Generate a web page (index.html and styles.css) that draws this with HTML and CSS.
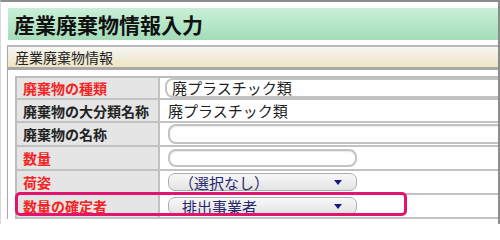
FILE: index.html
```html
<!DOCTYPE html>
<html lang="ja">
<head>
<meta charset="utf-8">
<title>産業廃棄物情報入力</title>
<link rel="stylesheet" href="styles.css">
</head>
<body>
<div class="screen">
  <h1 class="title">産業廃棄物情報入力</h1>
  <section class="panel">
    <div class="panel-head">産業廃棄物情報</div>
    <div class="panel-body">
      <div class="form-wrap">
        <table class="form">
          <tr class="row-short">
            <th class="req">廃棄物の種類</th>
            <td><div class="ro">廃プラスチック類</div></td>
          </tr>
          <tr class="row-short">
            <th>廃棄物の大分類名称</th>
            <td><span class="plain">廃プラスチック類</span></td>
          </tr>
          <tr>
            <th>廃棄物の名称</th>
            <td><div class="field field-wide"></div></td>
          </tr>
          <tr>
            <th class="req">数量</th>
            <td><div class="field field-short"></div></td>
          </tr>
          <tr>
            <th class="req">荷姿</th>
            <td><div class="select"><span>（選択なし）</span><i class="caret"></i></div></td>
          </tr>
          <tr>
            <th class="req">数量の確定者</th>
            <td><div class="select"><span class="sel-text">排出事業者</span><i class="caret"></i></div></td>
          </tr>
        </table>
        <div class="highlight"></div>
      </div>
    </div>
  </section>
</div>
</body>
</html>
```

FILE: styles.css
```css
html, body {
  margin: 0;
  padding: 0;
  background: #ffffff;
}

.screen {
  width: 500px;
  height: 224px;
  box-sizing: border-box;
  overflow: hidden;
  border-top: 2px solid #8c8c8c;
  border-right: 2px solid #8c8c8c;
  border-left: 1px solid #d8d8d8;
  padding: 6px 0 0 6px;
  font-family: "Noto Sans CJK JP", "Noto Sans", sans-serif;
  color: #222;
}

.title {
  margin: 0 0 5px 1px;
  height: 32px;
  line-height: 32px;
  padding-left: 6px;
  font-size: 21px;
  font-weight: bold;
  color: #111;
  background: linear-gradient(#c9f0d7, #a4dcb9);
  white-space: nowrap;
}

.panel {
  border-top: 2px solid #b9b9b9;
  border-left: 1px solid #a8a8a8;
}

.panel-head {
  height: 20px;
  line-height: 20px;
  padding-left: 7px;
  font-size: 14px;
  color: #222;
  background: linear-gradient(#f6f6f3, #efe5c3);
  border-bottom: 3px solid #a9a9a9;
}

.panel-body {
  padding: 6px 0 0 7px;
}

.form-wrap {
  position: relative;
}

.form {
  width: 100%;
  border-collapse: separate;
  border-spacing: 0;
  border-top: 2px solid #bdbdbd;
  border-left: 2px solid #bdbdbd;
  table-layout: fixed;
}

.form th,
.form td {
  padding: 0;
  height: 22px;
  border-bottom: 2px solid #c2c2c2;
  vertical-align: middle;
}

.form .row-short th,
.form .row-short td {
  height: 20px;
}

.form th {
  width: 135px;
  padding-left: 6px;
  text-align: left;
  font-size: 14px;
  font-weight: bold;
  color: #222;
  background: #e5e5e5;
  border-right: 2px solid #c2c2c2;
  white-space: nowrap;
}

.form th.req {
  color: #f42424;
}

.form td {
  padding-left: 8px;
  font-size: 15px;
  color: #222;
  white-space: nowrap;
}

.ro {
  margin-left: -3px;
  width: 360px;
  height: 20px;
  box-sizing: border-box;
  border: 2px solid #c4c4c4;
  border-radius: 8px;
  padding-left: 5px;
  line-height: 16px;
  font-size: 15px;
  color: #222;
}

.plain {
  font-size: 15px;
  line-height: 20px;
}

.field {
  box-sizing: border-box;
  border: 2px solid #c3c3c3;
  border-radius: 8px;
  background: #fff;
  box-shadow: inset 0 1px 1px rgba(0,0,0,0.08);
}

.field-wide {
  width: 360px;
  height: 20px;
}

.field-short {
  width: 189px;
  height: 18px;
}

.select {
  width: 189px;
  height: 18px;
  box-sizing: border-box;
  display: flex;
  align-items: center;
  justify-content: space-between;
  padding: 0 14px 0 10px;
  border: 1px solid #adadad;
  border-radius: 7px;
  background: linear-gradient(#f8f8f8, #e3e3e3);
  font-size: 15px;
  color: #26266e;
}

.select .sel-text {
  padding-left: 3px;
}

.caret {
  display: block;
  width: 0;
  height: 0;
  border-left: 4px solid transparent;
  border-right: 4px solid transparent;
  border-top: 5px solid #1a1a86;
}

.highlight {
  position: absolute;
  left: 0;
  top: 116px;
  width: 392px;
  height: 24px;
  box-sizing: border-box;
  border: 3px solid #e2146e;
  border-radius: 5px;
  pointer-events: none;
}
```
